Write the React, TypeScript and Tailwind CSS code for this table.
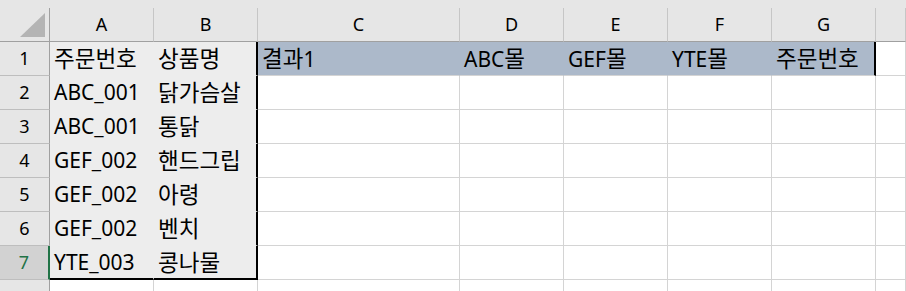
import React from 'react';

const COLS = ['A', 'B', 'C', 'D', 'E', 'F', 'G', ''];
const ROWS: string[][] = [
  ['주문번호', '상품명', '결과1', 'ABC몰', 'GEF몰', 'YTE몰', '주문번호', ''],
  ['ABC_001', '닭가슴살', '', '', '', '', '', ''],
  ['ABC_001', '통닭', '', '', '', '', '', ''],
  ['GEF_002', '핸드그립', '', '', '', '', '', ''],
  ['GEF_002', '아령', '', '', '', '', '', ''],
  ['GEF_002', '벤치', '', '', '', '', '', ''],
  ['YTE_003', '콩나물', '', '', '', '', '', ''],
];

const FONT = { fontFamily: '"Noto Sans", "Noto Sans CJK KR", sans-serif' };

// hangul glyphs run a bit wider in the original, so give them their own size
const CellText: React.FC<{ text: string }> = ({ text }) => {
  const runs = text.match(/[\uAC00-\uD7A3]+|[^\uAC00-\uD7A3]+/g) ?? [];
  return (
    <>
      {runs.map((run, i) =>
        /[\uAC00-\uD7A3]/.test(run) ? (
          <span key={i} className="text-[22.5px]">{run}</span>
        ) : (
          <span key={i}>{run}</span>
        )
      )}
    </>
  );
};

// pick the full class list for a body cell
const cellClass = (r: number, c: number) => {
  const last = r === 6;
  if (c === 0) {
    return last
      ? 'bg-[#ededed] border-r border-r-[#ededed] border-b-2 border-b-black'
      : 'bg-[#ededed] border-r border-r-[#ededed] border-b border-b-[#ededed]';
  }
  if (c === 1) {
    return last
      ? 'bg-[#ededed] border-r-2 border-r-black border-b-2 border-b-black'
      : 'bg-[#ededed] border-r-2 border-r-black border-b border-b-[#ededed]';
  }
  if (r === 0 && c >= 2 && c <= 5) {
    return 'bg-[#acb9ca] border-r border-r-[#acb9ca] border-b border-b-[#d4d4d4]';
  }
  if (r === 0 && c === 6) {
    return 'bg-[#acb9ca] border-r-2 border-r-black border-b border-b-[#d4d4d4]';
  }
  return 'bg-white border-r border-r-[#d4d4d4] border-b border-b-[#d4d4d4]';
};

const Corner = () => (
  <div className="h-[34px] bg-[#e6e6e6] border-r border-r-[#a0a0a0] border-b border-b-[#a0a0a0] flex">
    <svg width="49" height="33" viewBox="0 0 49 33">
      <polygon points="20,29 45,29 45,5" fill="#b4b4b4" />
    </svg>
  </div>
);

export default function App() {
  return (
    <div className="w-[906px] h-[291px] overflow-hidden bg-[#e6e6e6] text-black" style={FONT}>
      <div className="h-[8px]" />
      <div className="grid grid-cols-[50px_104px_104px_202px_104px_104px_104px_104px_1fr]">
        <Corner />
        {COLS.map((col, i) => (
          <div
            key={i}
            className="h-[34px] bg-[#e6e6e6] border-r border-r-[#c6c6c6] border-b border-b-[#a0a0a0] text-center text-[18px] leading-[33px]"
          >
            {col}
          </div>
        ))}
        {ROWS.map((row, r) => (
          <React.Fragment key={r}>
            {r === 6 ? (
              <div className="h-[34px] bg-[#d2d2d2] border-r-2 border-r-[#217346] border-b border-b-[#bebebe] text-center text-[18px] leading-[33px] text-[#217346]">
                {r + 1}
              </div>
            ) : (
              <div className="h-[34px] bg-[#e6e6e6] border-r border-r-[#a0a0a0] border-b border-b-[#bebebe] text-center text-[18px] leading-[33px]">
                {r + 1}
              </div>
            )}
            {row.map((text, c) => (
              <div
                key={c}
                className={`h-[34px] pl-[4px] text-[21px] leading-[33px] whitespace-nowrap overflow-hidden ${cellClass(r, c)}`}
              >
                <CellText text={text} />
              </div>
            ))}
          </React.Fragment>
        ))}
        <div className="h-[20px] bg-[#e6e6e6] border-r border-r-[#a0a0a0]" />
        {COLS.map((_, c) => (
          <div key={c} className="h-[20px] bg-white border-r border-r-[#d4d4d4]" />
        ))}
      </div>
    </div>
  );
}
